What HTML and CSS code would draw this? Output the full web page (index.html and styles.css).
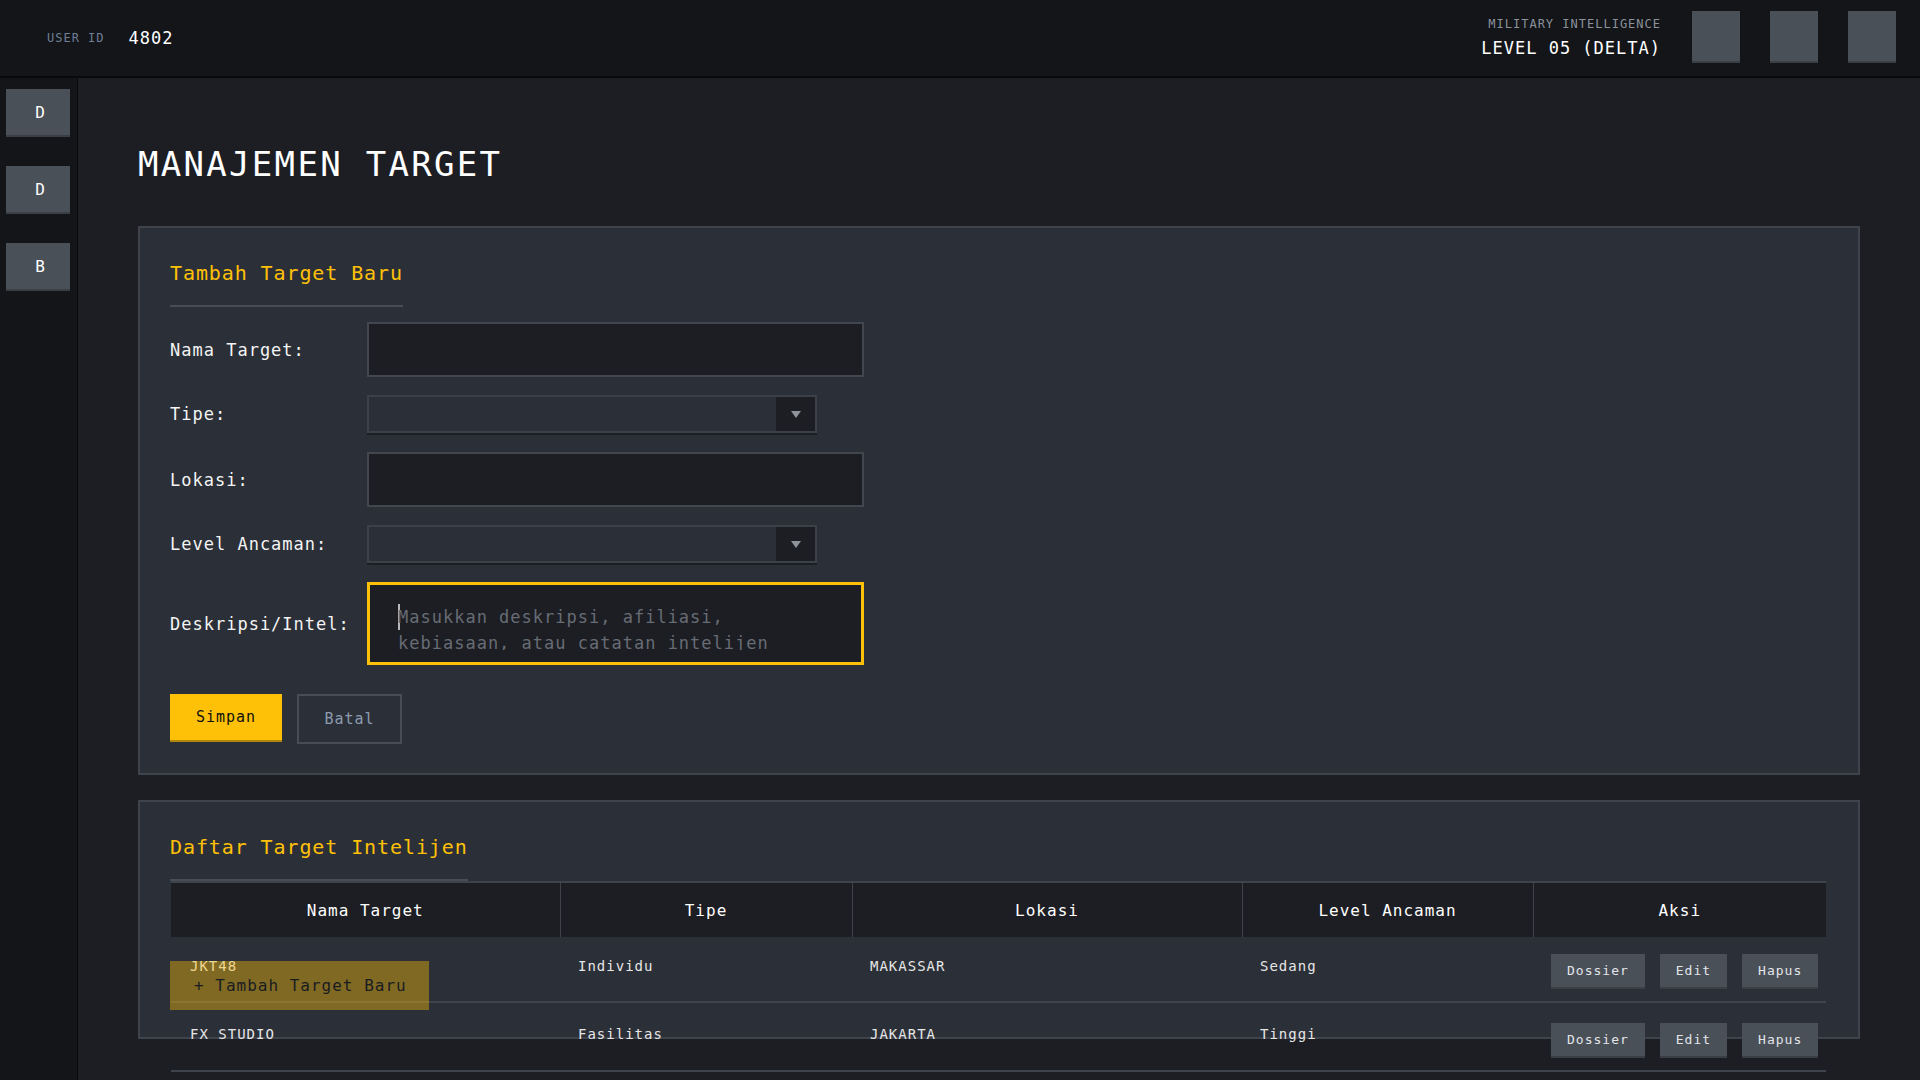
FILE: index.html
```html
<!DOCTYPE html>
<html lang="id">
<head>
<meta charset="utf-8">
<title>Manajemen Target</title>
<link rel="stylesheet" href="styles.css">
</head>
<body>
<header class="topbar">
  <div class="user">
    <span class="user-label">USER ID</span>
    <span class="user-id">4802</span>
  </div>
  <div class="top-right">
    <div class="clearance">
      <div class="clear-label">MILITARY INTELLIGENCE</div>
      <div class="clear-level">LEVEL 05 (DELTA)</div>
    </div>
    <div class="top-btns">
      <span class="top-btn"></span>
      <span class="top-btn"></span>
      <span class="top-btn"></span>
    </div>
  </div>
</header>
<div class="layout">
  <nav class="sidebar">
    <div class="side-btn">D</div>
    <div class="side-btn">D</div>
    <div class="side-btn">B</div>
  </nav>
  <main class="main">
    <h1 class="page-title">MANAJEMEN TARGET</h1>

    <section class="panel form-panel">
      <h2 class="panel-title">Tambah Target Baru</h2>
      <div class="form-row">
        <label class="form-label">Nama Target:</label>
        <div class="field-input"></div>
      </div>
      <div class="form-row sel-row">
        <label class="form-label">Tipe:</label>
        <div class="field-select"><span class="select-arrow"><span class="tri"></span></span></div>
      </div>
      <div class="form-row">
        <label class="form-label">Lokasi:</label>
        <div class="field-input"></div>
      </div>
      <div class="form-row sel-row">
        <label class="form-label">Level Ancaman:</label>
        <div class="field-select"><span class="select-arrow"><span class="tri"></span></span></div>
      </div>
      <div class="form-row last-row">
        <label class="form-label">Deskripsi/Intel:</label>
        <div class="field-textarea">
          <div class="textarea-clip"><span class="caret"></span>Masukkan deskripsi, afiliasi, kebiasaan, atau catatan intelijen</div>
        </div>
      </div>
      <div class="form-actions">
        <button class="btn-primary">Simpan</button>
        <button class="btn-ghost">Batal</button>
      </div>
    </section>

    <section class="panel list-panel">
      <h2 class="panel-title">Daftar Target Intelijen</h2>
      <table class="target-table">
        <colgroup>
          <col class="c1"><col class="c2"><col class="c3"><col class="c4"><col class="c5">
        </colgroup>
        <thead>
          <tr><th>Nama Target</th><th>Tipe</th><th>Lokasi</th><th>Level Ancaman</th><th>Aksi</th></tr>
        </thead>
        <tbody>
          <tr>
            <td>JKT48</td><td>Individu</td><td>MAKASSAR</td><td>Sedang</td>
            <td class="actions"><span class="act-btn">Dossier</span><span class="act-btn">Edit</span><span class="act-btn">Hapus</span></td>
          </tr>
          <tr class="row-next">
            <td>FX STUDIO</td><td>Fasilitas</td><td>JAKARTA</td><td>Tinggi</td>
            <td class="actions"><span class="act-btn">Dossier</span><span class="act-btn">Edit</span><span class="act-btn">Hapus</span></td>
          </tr>
        </tbody>
      </table>
      <button class="fab-add">+ Tambah Target Baru</button>
    </section>
  </main>
</div>
</body>
</html>
```
FILE: styles.css
```css
* { box-sizing: border-box; }

html, body {
  margin: 0;
  height: 100%;
  overflow: hidden;
}

body {
  background: #1c1e23;
  color: #f2f2f2;
  font-family: "DejaVu Sans Mono", "Liberation Mono", monospace;
}

/* Top bar */
.topbar {
  height: 78px;
  background: #131519;
  border-bottom: 2px solid #08090b;
  display: flex;
  align-items: center;
  justify-content: space-between;
  padding: 0 24px 0 47px;
}

.user {
  display: flex;
  align-items: center;
  gap: 24px;
}

.user-label {
  font-size: 12px;
  letter-spacing: 1px;
  color: #6f7f96;
}

.user-id {
  font-size: 17px;
  letter-spacing: 1px;
  color: #ffffff;
}

.top-right {
  display: flex;
  align-items: center;
  gap: 31px;
}

.clearance {
  text-align: right;
  padding-bottom: 1px;
}

.clear-label {
  font-size: 12px;
  letter-spacing: 1px;
  line-height: 14px;
  color: #8b929b;
  margin-bottom: 6px;
}

.clear-level {
  font-size: 17px;
  letter-spacing: 1px;
  line-height: 22px;
  color: #ffffff;
}

.top-btns {
  display: flex;
  gap: 30px;
  padding-bottom: 2px;
}

.top-btn {
  width: 48px;
  height: 52px;
  background: #4a5058;
  border-bottom: 2px solid #3a3f46;
}

/* Layout */
.layout {
  display: flex;
  height: calc(100vh - 78px);
}

.sidebar {
  width: 78px;
  flex: none;
  background: #131519;
  border-right: 1px solid #08090b;
  padding: 11px 7px 0 6px;
  display: flex;
  flex-direction: column;
  gap: 29px;
}

.side-btn {
  height: 48px;
  background: #4a5058;
  border-bottom: 2px solid #3a3f46;
  display: flex;
  align-items: center;
  justify-content: center;
  padding-left: 4px;
  font-size: 16px;
  color: #ffffff;
}

.main {
  flex: 1;
  padding: 66px 60px 0 60px;
}

.page-title {
  margin: 0 0 42px;
  font-size: 34px;
  line-height: 40px;
  letter-spacing: 2.3px;
  font-weight: normal;
  color: #ffffff;
}

/* Panels */
.panel {
  position: relative;
  background: #2b2f37;
  border: 2px solid #3e434c;
  padding: 33px 30px 29px;
}

.panel-title {
  width: fit-content;
  margin: 0 0 15px;
  font-size: 20px;
  line-height: 24px;
  letter-spacing: 0.9px;
  font-weight: normal;
  color: #ffc107;
  padding-bottom: 20px;
  border-bottom: 2px solid #474c55;
}

/* Form */
.form-row {
  display: flex;
  align-items: center;
  margin-bottom: 18px;
}

.form-row.sel-row { margin-bottom: 19px; }
.form-row.last-row { margin-bottom: 0; }

.form-label {
  width: 197px;
  flex: none;
  font-size: 17px;
  letter-spacing: 1px;
  color: #f4f4f4;
}

.field-input {
  width: 497px;
  height: 55px;
  background: #1c1e23;
  border: 2px solid #41464f;
}

.field-select {
  width: 450px;
  height: 38px;
  background: #2b2f37;
  border: 2px solid #3c4149;
  box-shadow: 0 2px 0 #1c1e23;
  display: flex;
  justify-content: flex-end;
}

.select-arrow {
  width: 39px;
  height: 100%;
  background: #1c1e23;
  display: flex;
  align-items: center;
  justify-content: center;
}

.tri {
  width: 0;
  height: 0;
  border-left: 5px solid transparent;
  border-right: 5px solid transparent;
  border-top: 7px solid #8e939a;
}

.field-textarea {
  width: 497px;
  height: 83px;
  background: #1c1e23;
  border: 3px solid #ffc107;
  padding: 3px 17px 0 16px;
}

.textarea-clip {
  height: 62px;
  overflow: hidden;
  padding: 16px 20px 0 12px;
  font-size: 17px;
  letter-spacing: 1px;
  line-height: 26px;
  color: #676c75;
}

.caret {
  display: inline-block;
  width: 2px;
  height: 26px;
  margin-right: -2px;
  background: #b5b8bd;
  vertical-align: top;
}

.form-actions {
  display: flex;
  align-items: flex-start;
  gap: 15px;
  margin-top: 29px;
}

.btn-primary,
.btn-ghost {
  font-family: inherit;
  font-size: 15px;
  letter-spacing: 1px;
  padding: 0;
  cursor: pointer;
}

.btn-primary {
  width: 112px;
  height: 48px;
  background: #ffc107;
  color: #111111;
  border: none;
  border-bottom: 2px solid #b3870a;
}

.btn-ghost {
  width: 105px;
  height: 50px;
  background: transparent;
  color: #8d9bb0;
  border: 2px solid #474c55;
}

/* List panel */
.list-panel {
  margin-top: 25px;
  height: 239px;
  padding-bottom: 0;
}

.list-panel .panel-title { margin-bottom: 0; }

.target-table {
  width: 1655px;
  margin-left: 1px;
  border-collapse: collapse;
  table-layout: fixed;
  border-top: 2px solid #3e434c;
}

.c1 { width: 389px; }
.c2 { width: 292px; }
.c3 { width: 390px; }
.c4 { width: 291px; }
.c5 { width: 293px; }

.target-table th {
  height: 55px;
  background: #1c1e23;
  font-size: 16px;
  letter-spacing: 1px;
  font-weight: normal;
  color: #ffffff;
  text-align: center;
  padding: 0;
}

.target-table th + th { border-left: 1px solid #3e434c; }

.target-table td {
  vertical-align: top;
  padding: 18px 18px 0 18px;
  font-size: 14px;
  line-height: 22px;
  letter-spacing: 1px;
  color: #e6e6e6;
  border-bottom: 2px solid #3e434c;
}

.target-table td:first-child { padding-left: 19px; }

.target-table td.actions {
  padding: 17px 10px 12px 18px;
  white-space: nowrap;
}

.target-table .row-next td { padding-top: 20px; }
.target-table .row-next td.actions { padding-top: 20px; padding-bottom: 12px; }

.act-btn {
  display: inline-flex;
  align-items: center;
  height: 35px;
  padding: 0 16px;
  margin-right: 15px;
  background: #4a5058;
  border-bottom: 2px solid #3a3f46;
  font-size: 13px;
  letter-spacing: 1px;
  color: #e2e5e9;
  vertical-align: top;
}

.act-btn:last-child { margin-right: 0; }

.fab-add {
  position: absolute;
  left: 30px;
  top: 159px;
  width: 259px;
  height: 49px;
  padding: 0 0 0 24px;
  text-align: left;
  background: #ffc107;
  color: #000000;
  border: none;
  opacity: 0.4;
  font-family: inherit;
  font-size: 16px;
  letter-spacing: 1px;
}
```
